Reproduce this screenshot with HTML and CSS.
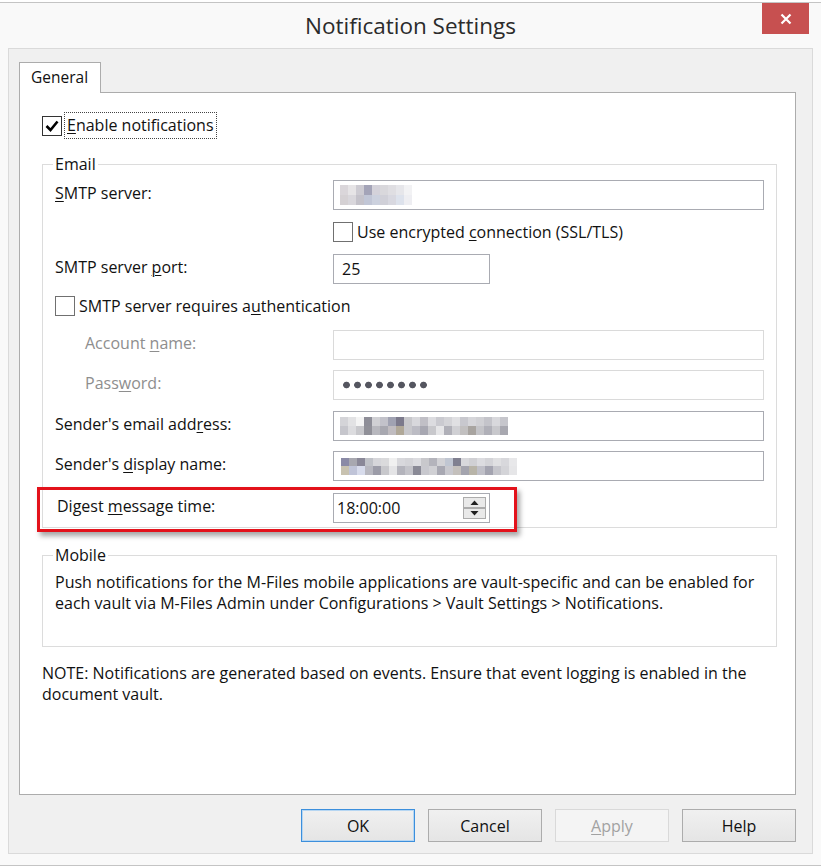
FILE: index.html
```html
<!DOCTYPE html>
<html lang="en">
<head>
<meta charset="utf-8">
<title>Notification Settings</title>
<link rel="stylesheet" href="styles.css">
</head>
<body>
<div class="window">
  <div class="titlebar">
    <div class="title">Notification Settings</div>
    <div class="close">
      <svg width="12" height="12" viewBox="0 0 12 12"><path d="M1.5 1.5 L10.5 10.5 M10.5 1.5 L1.5 10.5" stroke="#fff" stroke-width="2.2" fill="none"/></svg>
    </div>
  </div>
  <div class="client">
    <div class="tab">General</div>
    <div class="panel">
      <div class="enable-row">
        <span class="cb checked">
          <svg width="18" height="18" viewBox="0 0 18 18"><path d="M3.5 9 L7.5 13 L14.5 4.5" stroke="#000" stroke-width="2.6" fill="none"/></svg>
        </span>
        <span class="focus-label"><u>E</u>nable notifications</span>
      </div>

      <fieldset class="group">
        <legend>Email</legend>
        <div class="frow">
          <div class="lbl"><u>S</u>MTP server:</div>
          <div class="field">
            <svg class="mosaic" width="72" height="20" viewBox="0 0 72 20">
              <rect x="0" y="0" width="8" height="10" fill="#dad6da"/><rect x="8" y="0" width="8" height="10" fill="#e6e4e6"/><rect x="16" y="0" width="8" height="10" fill="#cdcbd2"/><rect x="24" y="0" width="8" height="10" fill="#a4a4b8"/><rect x="32" y="0" width="8" height="10" fill="#d4d2da"/><rect x="40" y="0" width="8" height="10" fill="#d9d8dc"/><rect x="48" y="0" width="8" height="10" fill="#dfdee2"/><rect x="56" y="0" width="8" height="10" fill="#e6e6ea"/><rect x="64" y="0" width="8" height="10" fill="#f2f2f4"/>
              <rect x="0" y="10" width="8" height="10" fill="#d5d1d4"/><rect x="8" y="10" width="8" height="10" fill="#d9d7dc"/><rect x="16" y="10" width="8" height="10" fill="#c4c2ca"/><rect x="24" y="10" width="8" height="10" fill="#c1c6d6"/><rect x="32" y="10" width="8" height="10" fill="#ccd1de"/><rect x="40" y="10" width="8" height="10" fill="#d0d0d8"/><rect x="48" y="10" width="8" height="10" fill="#d8d8e0"/><rect x="56" y="10" width="8" height="10" fill="#dde2ec"/><rect x="64" y="10" width="8" height="10" fill="#eeeef2"/>
            </svg>
          </div>
        </div>
        <div class="crow indent-field">
          <span class="cb"></span>
          <span class="cb-text">Use encrypted <u>c</u>onnection (SSL/TLS)</span>
        </div>
        <div class="frow">
          <div class="lbl">SMTP server <u>p</u>ort:</div>
          <div class="field short">25</div>
        </div>
        <div class="crow">
          <span class="cb"></span>
          <span class="cb-text">SMTP server requires a<u>u</u>thentication</span>
        </div>
        <div class="frow r-account">
          <div class="lbl disabled sub">Account <u>n</u>ame:</div>
          <div class="field off"></div>
        </div>
        <div class="frow r-password">
          <div class="lbl disabled sub">Pass<u>w</u>ord:</div>
          <div class="field off"><span class="dots"></span></div>
        </div>
        <div class="frow r-email">
          <div class="lbl">Sender's email add<u>r</u>ess:</div>
          <div class="field">
            <svg class="mosaic" width="168" height="18" viewBox="0 0 168 18">
              <rect x="0" y="0" width="8" height="9" fill="#d4d4d8"/><rect x="8" y="0" width="8" height="9" fill="#e2e2e4"/><rect x="16" y="0" width="8" height="9" fill="#f4f4f4"/><rect x="24" y="0" width="8" height="9" fill="#8e8e98"/><rect x="32" y="0" width="8" height="9" fill="#d0d0d4"/><rect x="40" y="0" width="8" height="9" fill="#c2c2ca"/><rect x="48" y="0" width="8" height="9" fill="#a0a2b2"/><rect x="56" y="0" width="8" height="9" fill="#7c7a8c"/><rect x="64" y="0" width="8" height="9" fill="#c8c8cc"/><rect x="72" y="0" width="8" height="9" fill="#d8d8dc"/><rect x="80" y="0" width="8" height="9" fill="#c0bfc6"/><rect x="88" y="0" width="8" height="9" fill="#dcdce0"/><rect x="96" y="0" width="8" height="9" fill="#cacad0"/><rect x="104" y="0" width="8" height="9" fill="#d4d4d8"/><rect x="112" y="0" width="8" height="9" fill="#e0e0e3"/><rect x="120" y="0" width="8" height="9" fill="#c8c8ce"/><rect x="128" y="0" width="8" height="9" fill="#d6d6da"/><rect x="136" y="0" width="8" height="9" fill="#d0d0d4"/><rect x="144" y="0" width="8" height="9" fill="#c4c4ca"/><rect x="152" y="0" width="8" height="9" fill="#d8d8dc"/><rect x="160" y="0" width="8" height="9" fill="#c6c6cc"/>
              <rect x="0" y="9" width="8" height="9" fill="#c6c6cc"/><rect x="8" y="9" width="8" height="9" fill="#dcdcdf"/><rect x="16" y="9" width="8" height="9" fill="#c8c8cc"/><rect x="24" y="9" width="8" height="9" fill="#909098"/><rect x="32" y="9" width="8" height="9" fill="#b8b8be"/><rect x="40" y="9" width="8" height="9" fill="#a8a8b0"/><rect x="48" y="9" width="8" height="9" fill="#c0bcc0"/><rect x="56" y="9" width="8" height="9" fill="#b0a898"/><rect x="64" y="9" width="8" height="9" fill="#c8c8cc"/><rect x="72" y="9" width="8" height="9" fill="#bcbcc4"/><rect x="80" y="9" width="8" height="9" fill="#a8a8b2"/><rect x="88" y="9" width="8" height="9" fill="#c8c8cc"/><rect x="96" y="9" width="8" height="9" fill="#e6e6e8"/><rect x="104" y="9" width="8" height="9" fill="#b0b0b8"/><rect x="112" y="9" width="8" height="9" fill="#d0d0d4"/><rect x="120" y="9" width="8" height="9" fill="#c2c0c0"/><rect x="128" y="9" width="8" height="9" fill="#a8a4a0"/><rect x="136" y="9" width="8" height="9" fill="#c4c4c8"/><rect x="144" y="9" width="8" height="9" fill="#b0b0b8"/><rect x="152" y="9" width="8" height="9" fill="#c8c8cc"/><rect x="160" y="9" width="8" height="9" fill="#a8a8b0"/>
            </svg>
          </div>
        </div>
        <div class="frow r-display">
          <div class="lbl">Sender's <u>d</u>isplay name:</div>
          <div class="field">
            <svg class="mosaic m-display" width="176" height="17" viewBox="0 0 176 17">
              <rect x="0" y="0" width="8" height="8" fill="#8a8aa6"/><rect x="8" y="0" width="8" height="8" fill="#a8a8b0"/><rect x="16" y="0" width="8" height="8" fill="#8a8898"/><rect x="24" y="0" width="8" height="8" fill="#c0c2c8"/><rect x="32" y="0" width="8" height="8" fill="#d6d6da"/><rect x="40" y="0" width="8" height="8" fill="#dadadc"/><rect x="48" y="0" width="8" height="8" fill="#f0f0f0"/><rect x="56" y="0" width="8" height="8" fill="#d8d8dc"/><rect x="64" y="0" width="8" height="8" fill="#d4d4d8"/><rect x="72" y="0" width="8" height="8" fill="#dcdce0"/><rect x="80" y="0" width="8" height="8" fill="#c8c8cc"/><rect x="88" y="0" width="8" height="8" fill="#b4b4bc"/><rect x="96" y="0" width="8" height="8" fill="#d2d2d6"/><rect x="104" y="0" width="8" height="8" fill="#c0c6d2"/><rect x="112" y="0" width="8" height="8" fill="#808090"/><rect x="120" y="0" width="8" height="8" fill="#d8d8dc"/><rect x="128" y="0" width="8" height="8" fill="#d0d0d4"/><rect x="136" y="0" width="8" height="8" fill="#dcdce0"/><rect x="144" y="0" width="8" height="8" fill="#d4d4d8"/><rect x="152" y="0" width="8" height="8" fill="#e0e0e2"/><rect x="160" y="0" width="8" height="8" fill="#d8d8dc"/><rect x="168" y="0" width="8" height="8" fill="#e8e8ea"/>
              <rect x="0" y="8" width="8" height="9" fill="#c8c2b0"/><rect x="8" y="8" width="8" height="9" fill="#c0c4d8"/><rect x="16" y="8" width="8" height="9" fill="#d8dcec"/><rect x="24" y="8" width="8" height="9" fill="#b8b8c0"/><rect x="32" y="8" width="8" height="9" fill="#9c9ca8"/><rect x="40" y="8" width="8" height="9" fill="#c8c8cc"/><rect x="48" y="8" width="8" height="9" fill="#e4e4e6"/><rect x="56" y="8" width="8" height="9" fill="#b4b4bc"/><rect x="64" y="8" width="8" height="9" fill="#c4c4ca"/><rect x="72" y="8" width="8" height="9" fill="#8a8a96"/><rect x="80" y="8" width="8" height="9" fill="#c8c8ce"/><rect x="88" y="8" width="8" height="9" fill="#d0d0d4"/><rect x="96" y="8" width="8" height="9" fill="#a8a8b2"/><rect x="104" y="8" width="8" height="9" fill="#c8c8ce"/><rect x="112" y="8" width="8" height="9" fill="#c4c0bc"/><rect x="120" y="8" width="8" height="9" fill="#a4a4ae"/><rect x="128" y="8" width="8" height="9" fill="#b8b4a8"/><rect x="136" y="8" width="8" height="9" fill="#c0c0c8"/><rect x="144" y="8" width="8" height="9" fill="#a4a4b0"/><rect x="152" y="8" width="8" height="9" fill="#c6c6cc"/><rect x="160" y="8" width="8" height="9" fill="#d4d4d8"/><rect x="168" y="8" width="8" height="9" fill="#e6e6e8"/>
            </svg>
          </div>
        </div>
        <div class="frow r-digest">
          <div class="lbl digest-lbl">Digest <u>m</u>essage time:</div>
          <div class="field short time">
            <span class="time-text">18:00:00</span>
            <svg class="spin" width="23" height="22" viewBox="0 0 23 22">
              <rect x="0.5" y="0.5" width="22" height="10" fill="#e9e9e9" stroke="#acacac"/>
              <rect x="0.5" y="11.5" width="22" height="10" fill="#e9e9e9" stroke="#acacac"/>
              <path d="M7.5 8 L15.5 8 L11.5 3.5 Z" fill="#202020"/>
              <path d="M7.5 14 L15.5 14 L11.5 18.5 Z" fill="#202020"/>
            </svg>
          </div>
          <div class="highlight"></div>
        </div>
      </fieldset>

      <fieldset class="group mobile">
        <legend>Mobile</legend>
        <p class="mobile-text">Push notifications for the M-Files mobile applications are vault-specific and can be enabled for<br>each vault via M-Files Admin under Configurations &gt; Vault Settings &gt; Notifications.</p>
      </fieldset>

      <p class="note">NOTE: Notifications are generated based on events. Ensure that event logging is enabled in the<br>document vault.</p>
    </div>
    <div class="buttons">
      <div class="btn default">OK</div>
      <div class="btn">Cancel</div>
      <div class="btn disabled"><u>A</u>pply</div>
      <div class="btn">Help</div>
    </div>
  </div>
</div>
</body>
</html>
```
FILE: styles.css
```css
* { box-sizing: border-box; }

body {
  margin: 0;
  background: #ffffff;
  font-family: "Open Sans", "Noto Sans", "DejaVu Sans", sans-serif;
  font-size: 16px;
  color: #111111;
}

u {
  text-decoration: underline;
  text-underline-offset: 2px;
  text-decoration-thickness: 1px;
}

.window {
  width: 821px;
  height: 864px;
  margin-top: 2px;
  background: #f9f9f9;
  border-top: 1px solid #c4c4c4;
  border-bottom: 1px solid #c4c4c4;
}

.titlebar {
  display: grid;
  grid-template-columns: 1fr auto 1fr;
  height: 45px;
}

.title {
  grid-column: 2;
  font-size: 22.5px;
  line-height: 30px;
  margin-top: 8px;
  color: #2b2b2b;
}

.close {
  grid-column: 3;
  justify-self: end;
  width: 47px;
  height: 31px;
  margin-right: 12px;
  background: #c75050;
  display: flex;
  align-items: center;
  justify-content: center;
}

.client {
  margin: 0 8px;
  height: 806px;
  border: 1px solid #dadada;
  background: #f0f0f0;
  padding: 13px 0 0 10px;
}

.tab {
  position: relative;
  z-index: 1;
  width: 82px;
  height: 31px;
  margin-bottom: -1px;
  border: 1px solid #acacac;
  border-bottom: none;
  background: #ffffff;
  padding-left: 11px;
  line-height: 28px;
  font-size: 15.5px;
}

.panel {
  width: 777px;
  height: 703px;
  border: 1px solid #acacac;
  background: #ffffff;
  padding: 20px 18px 0 22px;
}

.enable-row {
  display: flex;
  align-items: center;
  height: 25px;
  gap: 3px;
}

.cb {
  width: 20px;
  height: 20px;
  border: 1px solid #707070;
  background: #ffffff;
  display: flex;
  align-items: center;
  justify-content: center;
  flex: none;
}

.cb.checked {
  border-color: #333333;
}

.focus-label {
  outline: 1px dotted #444;
  padding: 0 2px;
  line-height: 25px;
}

.group {
  margin: 17px 0 0;
  padding: 7px 12px 4px;
  border: 1px solid #dcdcdc;
  min-width: 0;
}

.group legend {
  padding: 0 2px;
  margin-left: -2px;
  line-height: 18px;
}

.frow {
  display: flex;
  align-items: flex-start;
  height: 30px;
  position: relative;
}

.lbl {
  width: 278px;
  flex: none;
  padding-top: 3px;
  line-height: 20px;
}

.lbl.sub { padding-left: 30px; }
.lbl.disabled { color: #8e8e8e; }
.digest-lbl { padding-left: 2px; }

.field {
  width: 431px;
  height: 30px;
  border: 1px solid #a9abb2;
  background: #ffffff;
  display: flex;
  align-items: center;
  padding-left: 8px;
}

.field .mosaic { margin-left: -2px; }
.field .m-display { margin-left: -1px; }

.field.off { border-color: #dadada; }

.field.short { width: 157px; }

.crow {
  display: flex;
  align-items: center;
  height: 20px;
  margin-top: 12px;
  gap: 4px;
}

.crow.indent-field { padding-left: 278px; }

.frow + .crow { margin-top: 12px; }
.crow + .frow { margin-top: 12px; }
.r-account { margin-top: 14px !important; }
.r-password { margin-top: 10px; }
.r-email { margin-top: 11px; }
.r-display { margin-top: 10px; }
.r-digest { margin-top: 12px; }

.dots {
  width: 84px;
  height: 8px;
  margin-left: 1px;
  background: radial-gradient(circle at 3.5px 4px, #555660 3px, rgba(85,86,96,0) 3.7px) 0 0 / 11px 8px repeat-x;
}

.time {
  padding-left: 3px;
  justify-content: space-between;
  padding-right: 3px;
}

.highlight {
  position: absolute;
  left: -18px;
  top: -6px;
  width: 480px;
  height: 45px;
  border: 3px solid #e3121b;
  box-shadow: 3px 4px 5px rgba(0, 0, 0, 0.35);
  pointer-events: none;
}

.group.mobile {
  margin-top: 18px;
  padding: 8px 12px 32px;
}

.mobile-text {
  margin: 0;
  line-height: 21px;
  white-space: nowrap;
}

.note {
  margin: 16px 0 0;
  line-height: 21px;
  white-space: nowrap;
}

.buttons {
  width: 777px;
  margin-top: 14px;
  display: flex;
  justify-content: flex-end;
  gap: 13px;
}

.btn {
  width: 114px;
  height: 33px;
  border: 1px solid #acacac;
  background: linear-gradient(#f0f0f0, #e5e5e5);
  display: flex;
  align-items: center;
  justify-content: center;
}

.btn.default {
  border-color: #3c8fdc;
  box-shadow: inset 0 0 0 1px #b6d6f2;
}

.btn.disabled {
  border-color: #d9d9d9;
  background: #f4f4f4;
  color: #a2a2a2;
}
```
